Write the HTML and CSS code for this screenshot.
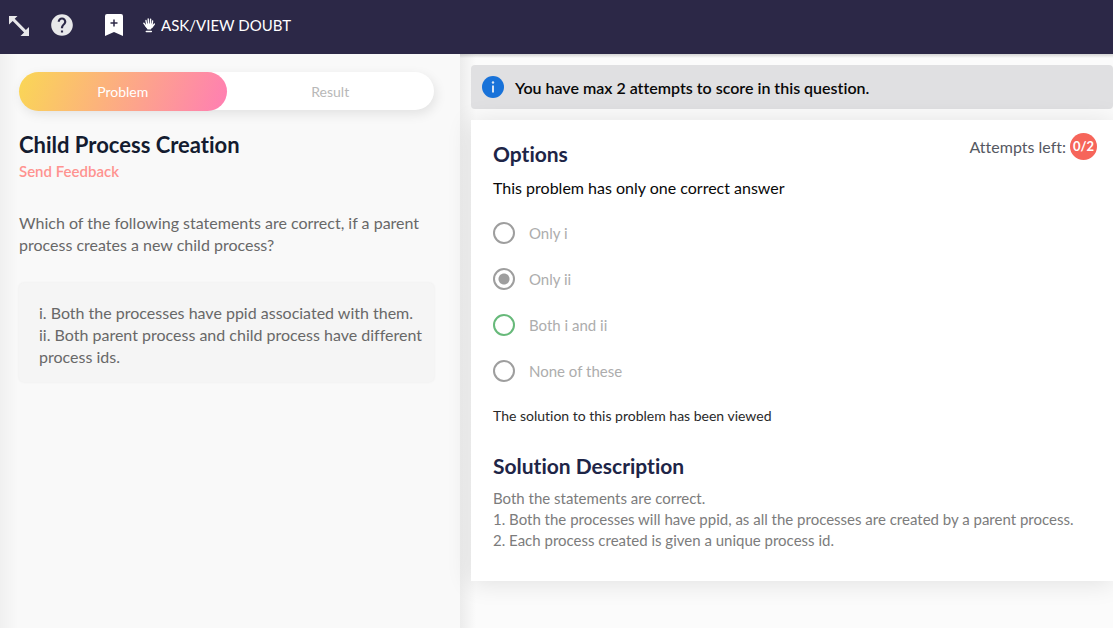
FILE: index.html
```html
<!DOCTYPE html>
<html lang="en">
<head>
<meta charset="utf-8">
<meta name="viewport" content="width=device-width, initial-scale=1">
<title>Child Process Creation</title>
<link rel="stylesheet" href="styles.css">
</head>
<body>
<header class="toolbar">
  <button class="tool" type="button" aria-label="Resize">
    <svg width="24" height="24" viewBox="0 0 24 24" fill="#e8e8ea"><path d="M2 3h8.500L7.700 5.800 18.900 17 22 14v9h-8.500l3.600-3.600L5.700 8 2 11.500z"/></svg>
  </button>
  <button class="tool help" type="button" aria-label="Help">
    <svg width="26" height="26" viewBox="0 0 24 24" fill="#e8e8ea"><path d="M12 2C6.480 2 2 6.480 2 12s4.480 10 10 10 10-4.480 10-10S17.520 2 12 2zm1 17h-2v-2h2v2zm2.070-7.750l-.9.920C13.450 12.900 13 13.500 13 15h-2v-.5c0-1.100.45-2.100 1.170-2.830l1.240-1.260c.37-.36.590-.86.590-1.410 0-1.100-.9-2-2-2s-2 .9-2 2H8c0-2.210 1.790-4 4-4s4 1.790 4 4c0 .88-.36 1.680-.93 2.250z"/></svg>
  </button>
  <button class="tool bookmark" type="button" aria-label="Bookmark">
    <svg width="18" height="22" viewBox="0 0 18 22"><path d="M2 0h14a2 2 0 0 1 2 2v20l-9-4-9 4V2a2 2 0 0 1 2-2z" fill="#fff"/><path d="M9 5.500v7M5.500 9h7" stroke="#2c2847" stroke-width="1.500"/></svg>
  </button>
  <button class="tool doubt" type="button">
    <svg width="12" height="15" viewBox="0 0 12 15" fill="none" stroke="#fff" stroke-linecap="round"><path d="M3 2.500l.8 5M5.200 1l.3 6M7.600 1.100L7.300 7M9.600 3L8.900 8M.8 5.200L3.600 9M11.400 6L8.900 9.300" stroke-width="1.400"/><path d="M3.400 5.500h5.700l.4 3.500-1.700 2.500H4.500L2.700 8.500z" fill="#fff" stroke="none"/><path d="M3.300 13.500h5" stroke-width="1.500"/></svg>
    <span>ASK/VIEW DOUBT</span>
  </button>
</header>
<main class="workspace">
  <section class="problem">
    <div class="tabs" role="tablist">
      <button class="tab tab-active" type="button" role="tab" aria-selected="true">Problem</button>
      <button class="tab" type="button" role="tab" aria-selected="false">Result</button>
    </div>
    <h1 class="title">Child Process Creation</h1>
    <a class="feedback" href="#">Send Feedback</a>
    <p class="question">Which of the following statements are correct, if a parent process creates a new child process?</p>
    <div class="statements">i. Both the processes have ppid associated with them.<br>ii. Both parent process and child process have different process ids.</div>
  </section>
  <section class="answer">
    <div class="notice">
      <svg width="22" height="22" viewBox="0 0 22 22"><circle cx="11" cy="11" r="11" fill="#1872d9"/><path d="M11 9.500v7" stroke="#d8e5f5" stroke-width="2"/><circle cx="11" cy="6.500" r="1.200" fill="#d8e5f5"/></svg>
      <span>You have max 2 attempts to score in this question.</span>
    </div>
    <div class="card">
      <div class="card-head">
        <h2 class="heading">Options</h2>
        <div class="attempts">Attempts left: <span class="count">0/2</span></div>
      </div>
      <form>
        <fieldset class="options">
          <legend class="hint">This problem has only one correct answer</legend>
          <label class="option"><input class="radio" type="radio" name="answer"><span>Only i</span></label>
          <label class="option"><input class="radio" type="radio" name="answer" checked><span>Only ii</span></label>
          <label class="option"><input class="radio radio-correct" type="radio" name="answer"><span>Both i and ii</span></label>
          <label class="option"><input class="radio" type="radio" name="answer"><span>None of these</span></label>
        </fieldset>
      </form>
      <p class="viewed">The solution to this problem has been viewed</p>
      <h2 class="heading">Solution Description</h2>
      <p class="solution">Both the statements are correct.<br>1. Both the processes will have ppid, as all the processes are created by a parent process.<br>2. Each process created is given a unique process id.</p>
    </div>
  </section>
</main>
</body>
</html>
```
FILE: styles.css
```css
* { box-sizing: border-box; }
body {
  margin: 0;
  min-height: 100vh;
  display: flex;
  flex-direction: column;
  background: #fbfbfb;
  font-family: Lato, "Open Sans", sans-serif;
  font-size: 16px;
  font-variant-ligatures: none;
}
button { font: inherit; border: 0; padding: 0; background: none; cursor: pointer; }
svg { display: block; flex: none; }
h1, h2, p { margin: 0; }

.toolbar {
  display: flex;
  align-items: center;
  height: 54px;
  padding: 0 7px 4px;
  background: #2c2847;
}
.tool { color: #fff; }
.help { margin-left: 18px; }
.bookmark { margin-left: 30px; }
.doubt { display: flex; align-items: center; gap: 6px; margin-left: 20px; font-size: 15px; }

.workspace { flex: 1; display: grid; grid-template-columns: 460fr 653fr; }

.problem {
  padding: 18px 26px 20px 19px;
  background: linear-gradient(90deg, #f0f0f0, #f9f9f9 18px);
}
.tabs {
  display: flex;
  height: 38px;
  border-radius: 20px;
  background: #fff;
  box-shadow: 2px 4px 12px #00000018;
}
.tab { flex: 1; height: 39px; border-radius: 20px; color: #b8b8b8; font-size: 14px; }
.tab-active { color: #fff; background: linear-gradient(110deg, #fad755, #ff7eb3); }
.title { margin-top: 22px; color: #141c30; font-size: 22px; line-height: 26px; }
.feedback {
  display: block;
  margin-top: 3px;
  color: #ff9390;
  font-size: 15px;
  font-weight: 600;
  line-height: 20px;
  text-decoration: none;
}
.question { margin-top: 31px; color: #686868; line-height: 22px; }
.statements {
  margin-top: 27px;
  padding: 19px 10px 14px 20px;
  border-radius: 5px;
  background: #f5f5f5;
  box-shadow: 0 0 3px #00000010;
  color: #686868;
  line-height: 22px;
}

.answer {
  padding: 11px 0 20px 11px;
  background:
    linear-gradient(#00000028, #00000000 4px),
    linear-gradient(90deg, #ececec, #fbfbfb 16px);
}
.notice {
  display: flex;
  align-items: center;
  gap: 11px;
  height: 44px;
  padding: 0 11px;
  border-radius: 4px;
  background: #e0e0e2;
  color: #080808;
  font-weight: 600;
}
.card {
  margin-top: 11px;
  padding: 13px 16px 30px 22px;
  background: #fff;
  box-shadow: 0 2px 24px #0000001c;
}
.card-head { display: flex; justify-content: space-between; }
.heading { color: #1e2547; font-size: 21px; line-height: 24px; }
.card-head .heading { margin-top: 9px; }
.attempts { display: flex; align-items: center; gap: 4px; height: 27px; color: #555862; }
.count {
  width: 27px;
  height: 27px;
  border-radius: 50%;
  background: #f6655a;
  color: #fff;
  font-size: 13px;
  font-weight: 700;
  line-height: 27px;
  text-align: center;
}
.options { margin: 0; padding: 0; border: 0; }
.hint { padding: 10px 0; color: #080808; line-height: 24px; }
.option {
  display: flex;
  align-items: center;
  gap: 14px;
  height: 46px;
  color: #adadad;
  font-size: 15px;
}
.radio {
  appearance: none;
  flex: none;
  width: 22px;
  height: 22px;
  margin: 0;
  border: 2px solid #9e9e9e;
  border-radius: 50%;
}
.radio:checked { background: radial-gradient(circle, #9e9e9e 5px, #9e9e9e00 6px); }
.radio-correct { border-color: #67b97a; }
.viewed { margin: 12px 0 28px; color: #292929; font-size: 14px; line-height: 20px; }
.solution { margin-top: 10px; color: #7c7c7c; font-size: 15px; line-height: 21px; }
```
